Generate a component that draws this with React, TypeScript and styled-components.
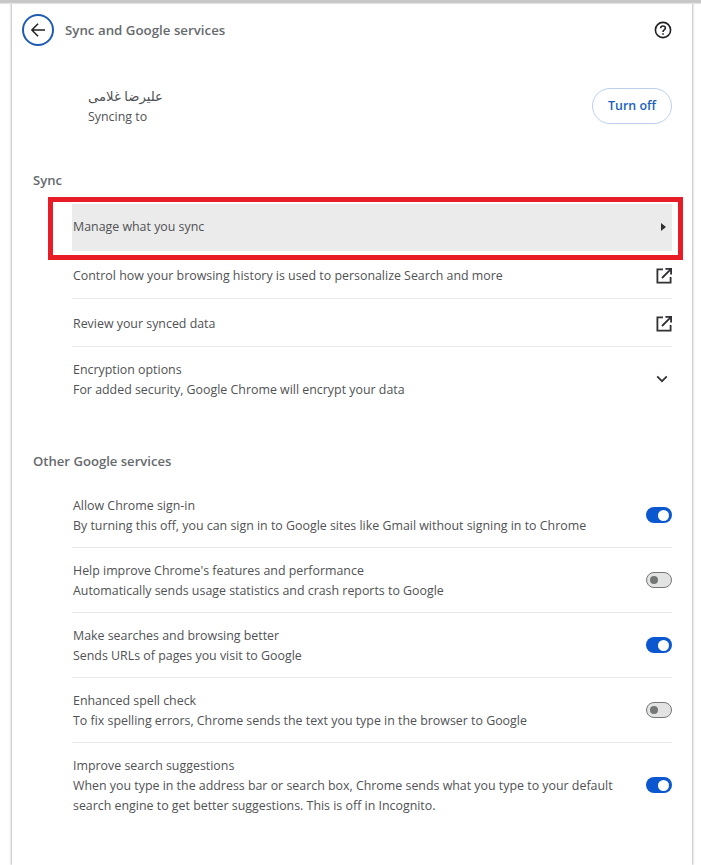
import styled, { createGlobalStyle } from 'styled-components';

const GlobalStyle = createGlobalStyle`
    html, body {
        margin: 0;
        padding: 0;
        background: #ffffff;
    }
    body {
        font-family: "Open Sans", "Noto Sans", "Liberation Sans", sans-serif;
        color: #505255;
    }
`;

const serviceRows = [
    { title: 'Allow Chrome sign-in', lines: ['By turning this off, you can sign in to Google sites like Gmail without signing in to Chrome'], on: true },
    { title: "Help improve Chrome's features and performance", lines: ['Automatically sends usage statistics and crash reports to Google'], on: false },
    { title: 'Make searches and browsing better', lines: ['Sends URLs of pages you visit to Google'], on: true },
    { title: 'Enhanced spell check', lines: ['To fix spelling errors, Chrome sends the text you type in the browser to Google'], on: false },
    {
        title: 'Improve search suggestions',
        lines: [
            'When you type in the address bar or search box, Chrome sends what you type to your default',
            'search engine to get better suggestions. This is off in Incognito.',
        ],
        on: true,
    },
];

const ExternalIcon = () => (
    <svg width="18" height="18" viewBox="0 0 18 18" fill="none" stroke="#303134" strokeWidth="1.8">
        <path d="M8 2.4H2.4v13.2h13.2V10" />
        <path d="M7 11 15.4 2.6M10.4 1.9h5.7v5.7" />
    </svg>
);

const Chevron = () => (
    <svg width="12" height="8" viewBox="0 0 12 8" fill="none" stroke="#303134" strokeWidth="1.7">
        <path d="M1.2 1.4 6 6.2l4.8-4.8" />
    </svg>
);

const BackIcon = () => (
    <svg width="16" height="16" viewBox="0 0 16 16" fill="none" stroke="#202124" strokeWidth="1.5">
        <path d="M15 8H2M8 1.8 1.9 8 8 14.2" />
    </svg>
);

const HelpIcon = () => (
    <svg width="18" height="18" viewBox="0 0 18 18" fill="none" stroke="#202124" strokeWidth="1.6">
        <circle cx="9" cy="9" r="7.6" />
        <path d="M6.6 7.2C6.7 5.8 7.7 5 9 5s2.4.9 2.4 2.1c0 1.9-2.4 1.9-2.4 3.9" />
        <path d="M9 12.2v1.5" />
    </svg>
);

export default function App() {
    return (
        <>
            <GlobalStyle />
            <Page>
                <TopShade />
                <Card>
                    <Header>
                        <BackButton>
                            <BackIcon />
                        </BackButton>
                        <Title>Sync and Google services</Title>
                        <HelpButton>
                            <HelpIcon />
                        </HelpButton>
                    </Header>
                    <Account>
                        <AccountText>
                            <AccountName dir="rtl">علیرضا غلامی</AccountName>
                            <div>Syncing to</div>
                        </AccountText>
                        <TurnOff>Turn off</TurnOff>
                    </Account>
                    <SectionTitle>Sync</SectionTitle>
                    <SyncList>
                        <ManageRow>
                            Manage what you sync
                            <Arrow />
                            <RedFrame />
                        </ManageRow>
                        <LinkRow>
                            Control how your browsing history is used to personalize Search and more
                            <ExternalIcon />
                        </LinkRow>
                        <LinkRow>
                            Review your synced data
                            <ExternalIcon />
                        </LinkRow>
                        <EncryptionRow>
                            <div>
                                <div>Encryption options</div>
                                <div>For added security, Google Chrome will encrypt your data</div>
                            </div>
                            <ChevronSlot>
                                <Chevron />
                            </ChevronSlot>
                        </EncryptionRow>
                    </SyncList>
                    <OtherTitle>Other Google services</OtherTitle>
                    <ServiceList>
                        {serviceRows.map(({ title, lines, on }) => (
                            <ServiceRow key={title}>
                                <ServiceText>
                                    <div>{title}</div>
                                    {lines.map((line) => (
                                        <div key={line}>{line}</div>
                                    ))}
                                </ServiceText>
                                <Toggle $on={on}>
                                    <Knob $on={on} />
                                </Toggle>
                            </ServiceRow>
                        ))}
                    </ServiceList>
                </Card>
            </Page>
        </>
    );
}

const Page = styled.div`
    width: 701px;
    height: 865px;
    overflow: hidden;
    box-sizing: border-box;
    padding: 3px 8px 0 12px;
    position: relative;
`;

const TopShade = styled.div`
    position: absolute;
    z-index: 2;
    left: 0;
    top: 0;
    width: 100%;
    height: 4px;
    background: linear-gradient(#c9c9c9, #c4c4c4 55%, #eeeeee);
`;

const Card = styled.div`
    width: 680px;
    height: 862px;
    box-sizing: border-box;
    font-size: 12.4px;
    line-height: 20px;
    background: #ffffff;
    box-shadow: -1px 0 2px #bdbdbd, 1px 0 2px #bdbdbd;
`;

const Header = styled.div`
    height: 54px;
    display: flex;
    align-items: center;
    padding: 0 20px 0 10px;
`;

const BackButton = styled.div`
    width: 28px;
    height: 28px;
    border: 2px solid #1d5bb5;
    border-radius: 50%;
    display: flex;
    align-items: center;
    justify-content: center;
`;

const Title = styled.div`
    margin-left: 11px;
    font-size: 13.3px;
    font-weight: 600;
    color: #666a6e;
    flex: 1;
`;

const HelpButton = styled.div`
    display: flex;
`;

const Account = styled.div`
    height: 64px;
    margin-top: 17px;
    display: flex;
    align-items: center;
    justify-content: space-between;
    padding: 0 20px 0 76px;
`;

const AccountText = styled.div`
    width: 75px;
    margin-top: 1px;
`;

const AccountName = styled.div`
    font-family: "Noto Sans", "DejaVu Sans", sans-serif;
    font-size: 13.2px;
    height: 20px;
    margin-top: -1px;
    margin-bottom: 1px;
`;

const TurnOff = styled.div`
    width: 80px;
    height: 36px;
    box-sizing: border-box;
    border: 1px solid #bcd0ee;
    border-radius: 18px;
    display: flex;
    align-items: center;
    justify-content: center;
    font-weight: 600;
    color: #1a5fc0;
`;

const SectionTitle = styled.div`
    margin: 32px 0 0 21px;
    font-size: 13.1px;
    font-weight: 600;
    color: #666a6e;
`;

const SyncList = styled.div`
    margin: 14px 20px 0 60px;
`;

const ManageRow = styled.div`
    position: relative;
    height: 47px;
    box-sizing: border-box;
    padding: 0 0 2px 1px;
    display: flex;
    align-items: center;
    justify-content: space-between;
    background: #ebebeb;
`;

const RedFrame = styled.div`
    position: absolute;
    left: -24px;
    top: -7px;
    width: 635px;
    height: 63px;
    box-sizing: border-box;
    border: 5px solid #e81c27;
`;

const Arrow = styled.span`
    width: 0;
    height: 0;
    margin-right: 6px;
    border-left: 5px solid #303134;
    border-top: 4.5px solid transparent;
    border-bottom: 4.5px solid transparent;
`;

const LinkRow = styled.div`
    height: 48px;
    box-sizing: border-box;
    display: flex;
    align-items: center;
    justify-content: space-between;
    border-bottom: 1px solid #e8e8e8;
    padding: 2px 0 0 1px;
    svg {
        margin-right: -1px;
    }
`;

const EncryptionRow = styled.div`
    height: 64px;
    box-sizing: border-box;
    padding: 2px 0 0 1px;
    display: flex;
    align-items: center;
    justify-content: space-between;
`;

const ChevronSlot = styled.div`
    display: flex;
    margin: 0 4px 2px 0;
`;

const OtherTitle = styled(SectionTitle)`
    margin-top: 40px;
`;

const ServiceList = styled.div`
    margin: 12px 20px 0 60px;
`;

const ServiceRow = styled.div`
    min-height: 65px;
    box-sizing: border-box;
    padding: 11px 0 11px 1px;
    display: flex;
    align-items: center;
    justify-content: space-between;
    border-bottom: 1px solid #e8e8e8;
    &:last-child {
        border-bottom: none;
    }
`;

const ServiceText = styled.div`
    padding-top: 2px;
`;

const Toggle = styled.div<{ $on: boolean }>`
    width: 26px;
    height: 16px;
    box-sizing: border-box;
    flex-shrink: 0;
    border-radius: 8px;
    display: flex;
    align-items: center;
    padding: 0 3px;
    justify-content: ${({ $on }) => ($on ? 'flex-end' : 'flex-start')};
    background: ${({ $on }) => ($on ? '#0b57d0' : '#e3e3e3')};
    border: ${({ $on }) => ($on ? 'none' : '1px solid #747775')};
`;

const Knob = styled.div<{ $on: boolean }>`
    width: ${({ $on }) => ($on ? '11px' : '8px')};
    height: ${({ $on }) => ($on ? '11px' : '8px')};
    border-radius: 50%;
    background: ${({ $on }) => ($on ? '#ffffff' : '#747775')};
`;
